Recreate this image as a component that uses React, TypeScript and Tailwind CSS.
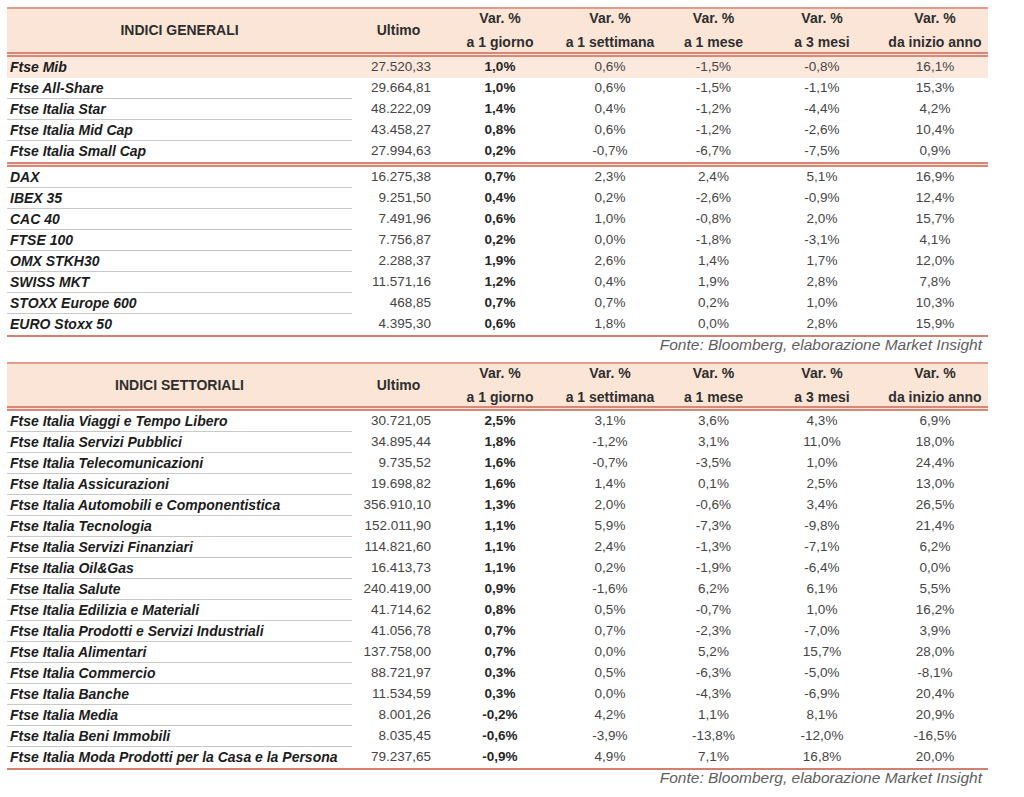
const FONT = "font-['Liberation_Sans',Arial,sans-serif]";
const COLS = "grid grid-cols-[345px_93px_110px_110px_97px_120px_106px]";

type Row = [string, string, string, string, string, string, string];

const generaliA: Row[] = [
  ["Ftse Mib", "27.520,33", "1,0%", "0,6%", "-1,5%", "-0,8%", "16,1%"],
  ["Ftse All-Share", "29.664,81", "1,0%", "0,6%", "-1,5%", "-1,1%", "15,3%"],
  ["Ftse Italia Star", "48.222,09", "1,4%", "0,4%", "-1,2%", "-4,4%", "4,2%"],
  ["Ftse Italia Mid Cap", "43.458,27", "0,8%", "0,6%", "-1,2%", "-2,6%", "10,4%"],
  ["Ftse Italia Small Cap", "27.994,63", "0,2%", "-0,7%", "-6,7%", "-7,5%", "0,9%"],
];

const generaliB: Row[] = [
  ["DAX", "16.275,38", "0,7%", "2,3%", "2,4%", "5,1%", "16,9%"],
  ["IBEX 35", "9.251,50", "0,4%", "0,2%", "-2,6%", "-0,9%", "12,4%"],
  ["CAC 40", "7.491,96", "0,6%", "1,0%", "-0,8%", "2,0%", "15,7%"],
  ["FTSE 100", "7.756,87", "0,2%", "0,0%", "-1,8%", "-3,1%", "4,1%"],
  ["OMX STKH30", "2.288,37", "1,9%", "2,6%", "1,4%", "1,7%", "12,0%"],
  ["SWISS MKT", "11.571,16", "1,2%", "0,4%", "1,9%", "2,8%", "7,8%"],
  ["STOXX Europe 600", "468,85", "0,7%", "0,7%", "0,2%", "1,0%", "10,3%"],
  ["EURO Stoxx 50", "4.395,30", "0,6%", "1,8%", "0,0%", "2,8%", "15,9%"],
];

const settoriali: Row[] = [
  ["Ftse Italia Viaggi e Tempo Libero", "30.721,05", "2,5%", "3,1%", "3,6%", "4,3%", "6,9%"],
  ["Ftse Italia Servizi Pubblici", "34.895,44", "1,8%", "-1,2%", "3,1%", "11,0%", "18,0%"],
  ["Ftse Italia Telecomunicazioni", "9.735,52", "1,6%", "-0,7%", "-3,5%", "1,0%", "24,4%"],
  ["Ftse Italia Assicurazioni", "19.698,82", "1,6%", "1,4%", "0,1%", "2,5%", "13,0%"],
  ["Ftse Italia Automobili e Componentistica", "356.910,10", "1,3%", "2,0%", "-0,6%", "3,4%", "26,5%"],
  ["Ftse Italia Tecnologia", "152.011,90", "1,1%", "5,9%", "-7,3%", "-9,8%", "21,4%"],
  ["Ftse Italia Servizi Finanziari", "114.821,60", "1,1%", "2,4%", "-1,3%", "-7,1%", "6,2%"],
  ["Ftse Italia Oil&Gas", "16.413,73", "1,1%", "0,2%", "-1,9%", "-6,4%", "0,0%"],
  ["Ftse Italia Salute", "240.419,00", "0,9%", "-1,6%", "6,2%", "6,1%", "5,5%"],
  ["Ftse Italia Edilizia e Materiali", "41.714,62", "0,8%", "0,5%", "-0,7%", "1,0%", "16,2%"],
  ["Ftse Italia Prodotti e Servizi Industriali", "41.056,78", "0,7%", "0,7%", "-2,3%", "-7,0%", "3,9%"],
  ["Ftse Italia Alimentari", "137.758,00", "0,7%", "0,0%", "5,2%", "15,7%", "28,0%"],
  ["Ftse Italia Commercio", "88.721,97", "0,3%", "0,5%", "-6,3%", "-5,0%", "-8,1%"],
  ["Ftse Italia Banche", "11.534,59", "0,3%", "0,0%", "-4,3%", "-6,9%", "20,4%"],
  ["Ftse Italia Media", "8.001,26", "-0,2%", "4,2%", "1,1%", "8,1%", "20,9%"],
  ["Ftse Italia Beni Immobili", "8.035,45", "-0,6%", "-3,9%", "-13,8%", "-12,0%", "-16,5%"],
  ["Ftse Italia Moda Prodotti per la Casa e la Persona", "79.237,65", "-0,9%", "4,9%", "7,1%", "16,8%", "20,0%"],
];

const periods = ["a 1 giorno", "a 1 settimana", "a 1 mese", "a 3 mesi", "da inizio anno"];

function DoubleRule() {
  return <div className="h-[5px] border-y-2 border-[#d98878] bg-[#fbe5d6]" />;
}

function Header({ title, short }: { title: string; short?: boolean }) {
  return (
    <div
      className={`${COLS} ${short ? "h-[42px]" : "h-[43px]"} bg-[#fbe5d6] text-[14px] font-bold text-[#2e2e2e]`}
    >
      <div className="flex items-center justify-center">{title}</div>
      <div className="flex items-center justify-center">Ultimo</div>
      {periods.map((p) => (
        <div key={p} className="flex flex-col items-center justify-center gap-[5px] leading-[19px]">
          <span>Var. %</span>
          <span>{p}</span>
        </div>
      ))}
    </div>
  );
}

function DataRow({ row, last, highlight }: { row: Row; last: boolean; highlight?: boolean }) {
  const [name, ultimo, d1, ...rest] = row;
  return (
    <div className={`${COLS} h-[21px] leading-[20px] ${highlight ? "bg-[#fce8dc]" : ""}`}>
      <div
        className={`pl-[3px] text-[14px] font-bold italic text-[#1c1c1c] ${
          last || highlight ? "" : "border-b border-[#c9c9c9]"
        }`}
      >
        {name}
      </div>
      <div className="pr-[14px] text-right text-[13.5px] text-[#454545]">{ultimo}</div>
      <div className="text-center text-[13.5px] font-bold text-[#262626]">{d1}</div>
      {rest.map((v, i) => (
        <div key={i} className="text-center text-[13.5px] text-[#454545]">
          {v}
        </div>
      ))}
    </div>
  );
}

function Fonte() {
  return (
    <div className="h-[20px] pr-[6px] text-right text-[15.5px] italic leading-[16px] text-[#5e5e5e]">
      Fonte: Bloomberg, elaborazione Market Insight
    </div>
  );
}

function Group({ rows, highlightFirst }: { rows: Row[]; highlightFirst?: boolean }) {
  return (
    <>
      {rows.map((r, i) => (
        <DataRow key={r[0]} row={r} last={i === rows.length - 1} highlight={highlightFirst && i === 0} />
      ))}
    </>
  );
}

export default function App() {
  return (
    <div className={`${FONT} min-h-[797px] w-[1024px] bg-white pl-[7px] pt-[7px]`}>
      <div className="w-[981px]">
        <div className="border-t-2 border-[#e29c8c]">
          <Header title="INDICI GENERALI" />
          <DoubleRule />
          <Group rows={generaliA} highlightFirst />
          <DoubleRule />
          <Group rows={generaliB} />
        </div>
        <div className="border-t-2 border-[#d4806f]" />
        <Fonte />

        <div className="mt-[5px] border-t-2 border-[#e29c8c]">
          <Header title="INDICI SETTORIALI" short />
          <DoubleRule />
          <Group rows={settoriali} />
        </div>
        <div className="border-t-2 border-[#d4806f]" />
        <Fonte />
      </div>
    </div>
  );
}
